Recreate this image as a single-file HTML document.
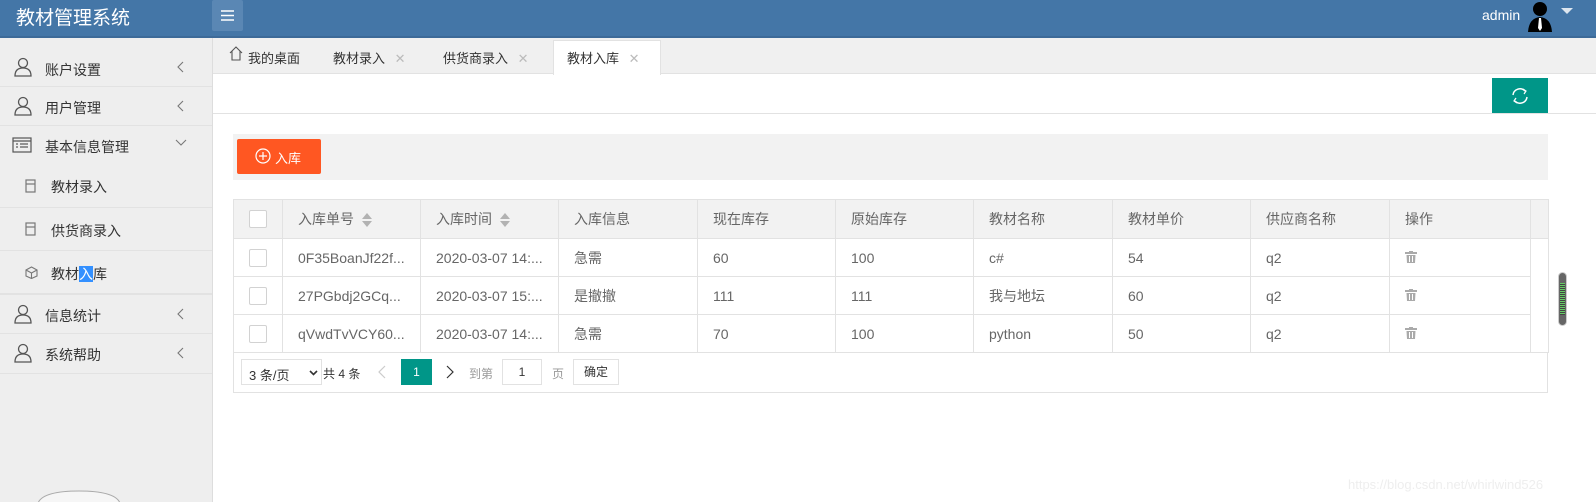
<!DOCTYPE html>
<html style="overflow:hidden"><head><meta charset="utf-8"><style>
*{margin:0;padding:0;box-sizing:border-box}
html,body{width:1596px;height:502px;overflow:hidden}
body{background:#fff;font-family:"Liberation Sans","Noto Sans CJK SC",sans-serif;font-size:14px;color:#333;position:relative}
.a{position:absolute}
#hd{left:0;top:0;width:1596px;height:38px;background:#4476a7;border-bottom:2px solid #3d6a98}
#side{left:0;top:38px;width:213px;height:464px;background:#eee;border-right:1px solid #ddd;overflow:hidden}
.mi{position:absolute;left:0;width:212px;border-bottom:1px solid #e2e2e2;font-size:14px;color:#333}
.mi span{position:absolute;left:45px}
.sub span{left:51px}
.arr{position:absolute;left:177px;top:13px}
table{border-collapse:collapse;table-layout:fixed;position:absolute;left:233px;top:199px;width:1315px}
td{border:1px solid #e2e2e2;height:38px;padding-left:15px;color:#666;font-size:14px;white-space:nowrap;overflow:hidden}
tr.h td{background:#f2f2f2;height:39px;color:#666}
.cb{display:inline-block;width:18px;height:18px;border:1px solid #d2d2d2;background:#fff;border-radius:2px;vertical-align:middle}
.sort{display:inline-block;margin-left:8px;vertical-align:middle;width:10px;height:14px;position:relative}
.sort:before{content:"";position:absolute;left:0;top:0;border:5px solid transparent;border-bottom:6px solid #b2b2b2;border-top:0}
.sort:after{content:"";position:absolute;left:0;top:8px;border:5px solid transparent;border-top:6px solid #b2b2b2;border-bottom:0}
</style></head><body>
<div id="hd" class="a">
 <div class="a" style="left:16px;top:3px;color:#fff;font-size:19px">教材管理系统</div>
 <div class="a" style="left:212px;top:0;width:31px;height:31px;background:#5a87b4;border-radius:2px">
  <svg width="31" height="31"><g stroke="#fff" stroke-width="1.5"><line x1="9" y1="11" x2="22" y2="11"/><line x1="9" y1="15.5" x2="22" y2="15.5"/><line x1="9" y1="20" x2="22" y2="20"/></g></svg></div>
 <div class="a" style="left:1482px;top:7px;color:#fff;font-size:14px">admin</div>
 <svg class="a" style="left:1525px;top:0" width="32" height="32"><circle cx="15" cy="9" r="7"/><path d="M3 32 Q4 18 15 17 Q26 18 27 32Z"/><path d="M14 18 L16 18 L17 28 L15 31 L13 28Z" fill="#fff"/></svg>
 <div class="a" style="left:1561px;top:8px;border:6px solid transparent;border-top:6px solid #dde6ef"></div>
</div>
<div id="side" class="a">
 <div class="mi" style="top:10px;height:39px"><svg class="a" style="left:14px;top:9px" width="18" height="20" fill="none" stroke="#555" stroke-width="1.3"><circle cx="9" cy="6" r="4.5"/><path d="M1 19 Q1 11 9 11 Q17 11 17 19Z"/></svg><span style="top:12px">账户设置</span><svg class="arr" width="7" height="12" fill="none" stroke="#777" stroke-width="1.1"><path d="M6 1 L1 6 L6 11"/></svg></div>
 <div class="mi" style="top:49px;height:39px"><svg class="a" style="left:14px;top:9px" width="18" height="20" fill="none" stroke="#555" stroke-width="1.3"><circle cx="9" cy="6" r="4.5"/><path d="M1 19 Q1 11 9 11 Q17 11 17 19Z"/></svg><span style="top:11px">用户管理</span><svg class="arr" width="7" height="12" fill="none" stroke="#777" stroke-width="1.1"><path d="M6 1 L1 6 L6 11"/></svg></div>
 <div class="mi" style="top:88px;height:39px;border:0"><svg class="a" style="left:12px;top:11px" width="20" height="16" fill="none" stroke="#555" stroke-width="1.2"><rect x="1" y="1" width="18" height="14"/><line x1="1" y1="4" x2="19" y2="4"/><line x1="8" y1="7" x2="16" y2="7"/><line x1="8" y1="10" x2="16" y2="10"/><line x1="4" y1="7" x2="6" y2="7"/><line x1="4" y1="10" x2="6" y2="10"/></svg><span style="top:11px">基本信息管理</span><svg class="a" style="left:175px;top:13px" width="12" height="8" fill="none" stroke="#777" stroke-width="1.1"><path d="M1 1 L6 6 L11 1"/></svg></div>
 <div class="mi sub" style="top:127px;height:43px"><svg class="a" style="left:25px;top:14px" width="12" height="14" fill="none" stroke="#777" stroke-width="1.2"><rect x="1" y="1" width="9" height="12"/><line x1="1" y1="5" x2="10" y2="5"/></svg><span style="top:12px">教材录入</span></div>
 <div class="mi sub" style="top:170px;height:43px"><svg class="a" style="left:25px;top:14px" width="12" height="14" fill="none" stroke="#777" stroke-width="1.2"><rect x="1" y="1" width="9" height="12"/><line x1="1" y1="5" x2="10" y2="5"/></svg><span style="top:13px">供货商录入</span></div>
 <div class="mi sub" style="top:213px;height:44px;border-bottom:2px solid #e2e2e2"><svg class="a" style="left:25px;top:15px" width="13" height="13" fill="none" stroke="#777" stroke-width="1.1"><path d="M6.5 1 L12 4 L12 10 L6.5 12.5 L1 10 L1 4Z M1 4 L6.5 7 L12 4 M6.5 7 V12.5"/></svg><span style="top:13px">教材<b style="font-weight:normal;background:#3390ff;color:#fff">入</b>库</span></div>
 <div class="mi" style="top:257px;height:39px"><svg class="a" style="left:14px;top:9px" width="18" height="20" fill="none" stroke="#555" stroke-width="1.3"><circle cx="9" cy="6" r="4.5"/><path d="M1 19 Q1 11 9 11 Q17 11 17 19Z"/></svg><span style="top:11px">信息统计</span><svg class="arr" width="7" height="12" fill="none" stroke="#777" stroke-width="1.1"><path d="M6 1 L1 6 L6 11"/></svg></div>
 <div class="mi" style="top:296px;height:40px"><svg class="a" style="left:14px;top:9px" width="18" height="20" fill="none" stroke="#555" stroke-width="1.3"><circle cx="9" cy="6" r="4.5"/><path d="M1 19 Q1 11 9 11 Q17 11 17 19Z"/></svg><span style="top:11px">系统帮助</span><svg class="arr" width="7" height="12" fill="none" stroke="#777" stroke-width="1.1"><path d="M6 1 L1 6 L6 11"/></svg></div>
 <svg class="a" style="left:37px;top:452px" width="84" height="12"><path d="M1 13 Q6 1 42 1 Q78 1 83 13Z" fill="#f6f6f6" stroke="#aaa"/></svg>
</div>
<div class="a" style="left:213px;top:38px;width:1383px;height:36px;background:#f0f0f0;border-bottom:1px solid #e2e2e2"></div>
<div class="a" style="left:553px;top:40px;width:108px;height:35px;background:#fff;border:1px solid #e2e2e2;border-bottom:0"></div>
<svg class="a" style="left:229px;top:46px" width="14" height="15" fill="none" stroke="#555" stroke-width="1.1"><path d="M1 7 L7 1 L13 7 M3 5 V14 H11 V5"/></svg>
<div class="a" style="left:248px;top:48px;font-size:13px">我的桌面</div>
<div class="a" style="left:333px;top:48px;font-size:13px">教材录入 <span style="color:#bbb;margin-left:6px">✕</span></div>
<div class="a" style="left:443px;top:48px;font-size:13px">供货商录入 <span style="color:#bbb;margin-left:6px">✕</span></div>
<div class="a" style="left:567px;top:48px;font-size:13px">教材入库 <span style="color:#bbb;margin-left:6px">✕</span></div>
<div class="a" style="left:213px;top:113px;width:1383px;height:1px;background:#e2e2e2"></div>
<div class="a" style="left:1492px;top:78px;width:56px;height:35px;background:#009688">
 <svg class="a" style="left:18px;top:8px" width="20" height="20" fill="none" stroke="#fff" stroke-width="1.5"><path d="M3 9 A7 7 0 0 1 15 5"/><path d="M17 11 A7 7 0 0 1 5 15"/><path d="M13 3 L16 5 L14 8" stroke-width="1.2"/><path d="M7 17 L4 15 L6 12" stroke-width="1.2"/></svg>
</div>
<div class="a" style="left:233px;top:134px;width:1315px;height:46px;background:#f2f2f2"></div>
<div class="a" style="left:237px;top:139px;width:84px;height:35px;background:#ff5722;border-radius:2px;color:#fff;font-size:13px">
 <svg class="a" style="left:18px;top:9px" width="16" height="16" fill="none" stroke="#fff" stroke-width="1.2"><circle cx="8" cy="8" r="7"/><path d="M8 4V12M4 8H12"/></svg><span class="a" style="left:38px;top:9px">入库</span></div>
<table>
<colgroup><col style="width:49px"><col style="width:138px"><col style="width:138px"><col style="width:139px"><col style="width:138px"><col style="width:138px"><col style="width:139px"><col style="width:138px"><col style="width:139px"><col style="width:141px"><col style="width:18px"></colgroup>
<tr class="h"><td><i class="cb"></i></td><td>入库单号<i class="sort"></i></td><td>入库时间<i class="sort"></i></td><td>入库信息</td><td>现在库存</td><td>原始库存</td><td>教材名称</td><td>教材单价</td><td>供应商名称</td><td>操作</td><td style="padding:0"></td></tr>
<tr><td><i class="cb"></i></td><td>0F35BoanJf22f...</td><td>2020-03-07 14:...</td><td>急需</td><td>60</td><td>100</td><td>c#</td><td>54</td><td>q2</td><td><svg width="12" height="12" fill="#aaa"><rect x="0" y="1" width="12" height="2"/><rect x="4" y="0" width="4" height="2"/><path d="M1.5 4H10.5L10 12H2Z"/><g stroke="#fff"><line x1="4.5" y1="5" x2="4.5" y2="11"/><line x1="7.5" y1="5" x2="7.5" y2="11"/></g></svg></td><td rowspan="3" style="padding:0"></td></tr>
<tr><td><i class="cb"></i></td><td>27PGbdj2GCq...</td><td>2020-03-07 15:...</td><td>是撤撤</td><td>111</td><td>111</td><td>我与地坛</td><td>60</td><td>q2</td><td><svg width="12" height="12" fill="#aaa"><rect x="0" y="1" width="12" height="2"/><rect x="4" y="0" width="4" height="2"/><path d="M1.5 4H10.5L10 12H2Z"/><g stroke="#fff"><line x1="4.5" y1="5" x2="4.5" y2="11"/><line x1="7.5" y1="5" x2="7.5" y2="11"/></g></svg></td></tr>
<tr><td><i class="cb"></i></td><td>qVwdTvVCY60...</td><td>2020-03-07 14:...</td><td>急需</td><td>70</td><td>100</td><td>python</td><td>50</td><td>q2</td><td><svg width="12" height="12" fill="#aaa"><rect x="0" y="1" width="12" height="2"/><rect x="4" y="0" width="4" height="2"/><path d="M1.5 4H10.5L10 12H2Z"/><g stroke="#fff"><line x1="4.5" y1="5" x2="4.5" y2="11"/><line x1="7.5" y1="5" x2="7.5" y2="11"/></g></svg></td></tr>
</table>
<div class="a" style="left:233px;top:352px;width:1315px;height:41px;border:1px solid #e2e2e2;border-top:0;font-size:12px;color:#333">
 <div class="a" style="left:7px;top:7px;width:81px;height:26px;border:1px solid #e2e2e2;background:#fff;font-size:13px"><span class="a" style="left:7px;top:5px">3 条/页</span><svg class="a" style="left:67px;top:10px" width="9" height="6" fill="none" stroke="#333" stroke-width="1.6"><path d="M1 1 L4.5 4.5 L8 1"/></svg></div>
 <div class="a" style="left:89px;top:13px">共 4 条</div>
 <svg class="a" style="left:144px;top:13px" width="8" height="14" fill="none" stroke="#ccc" stroke-width="1.2"><path d="M7 1 L1 7 L7 13"/></svg>
 <div class="a" style="left:167px;top:7px;width:31px;height:26px;background:#009688;color:#fff;text-align:center;line-height:26px">1</div>
 <svg class="a" style="left:212px;top:13px" width="8" height="14" fill="none" stroke="#333" stroke-width="1.2"><path d="M1 1 L7 7 L1 13"/></svg>
 <div class="a" style="left:235px;top:13px;color:#999">到第</div>
 <div class="a" style="left:268px;top:7px;width:40px;height:26px;border:1px solid #e2e2e2;text-align:center;line-height:24px">1</div>
 <div class="a" style="left:318px;top:13px;color:#999">页</div>
 <div class="a" style="left:339px;top:7px;width:46px;height:26px;border:1px solid #e2e2e2;text-align:center;line-height:24px">确定</div>
</div>
<div class="a" style="left:1558px;top:272px;width:9px;height:54px;background:#666;border-radius:5px;border:1px solid #ccc">
 <div style="margin:10px 1px;height:32px;background:repeating-linear-gradient(#6c6 0 1px,#444 1px 2px)"></div></div>
<div class="a" style="left:1348px;top:477px;color:#eee;font-size:13px">https://blog.csdn.net/whirlwind526</div>
</body></html>
